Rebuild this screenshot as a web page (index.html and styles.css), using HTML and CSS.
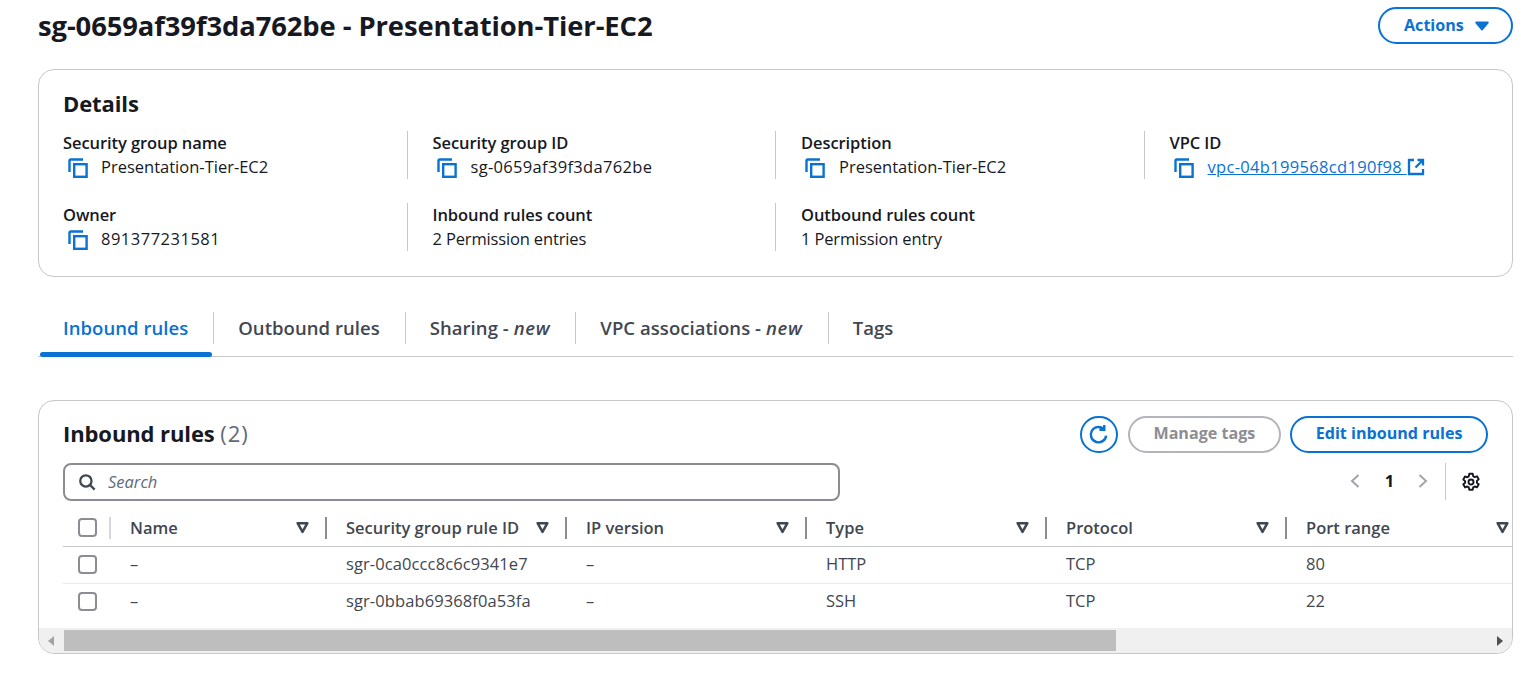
FILE: index.html
```html
<!DOCTYPE html>
<html>
<head>
    <title>sg-0659af39f3da762be - Presentation-Tier-EC2</title>
    <meta charset="UTF-8">
    <link rel="stylesheet" href="styles.css">
</head>
<body>
    <svg class="sprites" width="0" height="0">
        <symbol id="copy" viewBox="0 0 20 20">
            <path d="M1.5 14V2.5a1 1 0 0 1 1-1H15" fill="none" stroke="currentColor" stroke-width="2.4"/>
            <rect x="6.2" y="6.2" width="12.4" height="12.6" fill="none" stroke="currentColor" stroke-width="2.4"/>
        </symbol>
        <symbol id="caret" viewBox="0 0 16 16">
            <path d="M3 5h10l-5 6z" fill="currentColor" stroke="currentColor" stroke-width="2" stroke-linejoin="round"/>
        </symbol>
        <symbol id="sort" viewBox="0 0 12 12">
            <path d="M1.5 2h9L6 10z" fill="none" stroke="currentColor" stroke-width="2.300" stroke-linejoin="round"/>
        </symbol>
    </svg>

    <div class="page-head">
        <h1>sg-0659af39f3da762be - Presentation-Tier-EC2</h1>
        <button class="btn actions">Actions <svg class="caret"><use href="#caret"/></svg></button>
    </div>

    <section class="card details">
        <h2>Details</h2>
        <div class="details-grid">
            <div class="field">
                <div class="label">Security group name</div>
                <div class="value"><svg class="copy"><use href="#copy"/></svg>Presentation-Tier-EC2</div>
            </div>
            <div class="field">
                <div class="label">Security group ID</div>
                <div class="value digits"><svg class="copy"><use href="#copy"/></svg>sg-0659af39f3da762be</div>
            </div>
            <div class="field">
                <div class="label">Description</div>
                <div class="value"><svg class="copy"><use href="#copy"/></svg>Presentation-Tier-EC2</div>
            </div>
            <div class="field">
                <div class="label">VPC ID</div>
                <div class="value digits"><svg class="copy"><use href="#copy"/></svg><a href="#">vpc-04b199568cd190f98 </a>
                    <svg class="external" viewBox="0 0 18 18"><path d="M7 2H2v14h14v-5M10.500 2H16v5.500M16 2 8.500 9.500" fill="none" stroke="currentColor" stroke-width="2.300"/></svg>
                </div>
            </div>
            <div class="field">
                <div class="label">Owner</div>
                <div class="value owner-id"><svg class="copy"><use href="#copy"/></svg>891377231581</div>
            </div>
            <div class="field">
                <div class="label">Inbound rules count</div>
                <div class="value tight">2 Permission entries</div>
            </div>
            <div class="field">
                <div class="label">Outbound rules count</div>
                <div class="value tight">1 Permission entry</div>
            </div>
        </div>
    </section>

    <nav class="tabs">
        <div class="tab active"><span>Inbound rules</span></div>
        <div class="tab"><span>Outbound rules</span></div>
        <div class="tab"><span>Sharing - <i>new</i></span></div>
        <div class="tab"><span>VPC associations - <i>new</i></span></div>
        <div class="tab"><span>Tags</span></div>
    </nav>

    <section class="card rules">
        <div class="rules-head">
            <h2>Inbound rules <span class="count">(2)</span></h2>
            <div class="rules-actions">
                <button class="btn refresh" aria-label="Refresh">
                    <svg viewBox="0 0 20 20"><path d="M16.500 10.500A7 7 0 1 1 14 4.300M14.800 0.800v4.400h-4.400" fill="none" stroke="currentColor" stroke-width="2.200"/></svg>
                </button>
                <button class="btn disabled">Manage tags</button>
                <button class="btn">Edit inbound rules</button>
            </div>
        </div>
        <div class="filter-row">
            <div class="search">
                <svg viewBox="0 0 16 16"><circle cx="7" cy="7" r="5" fill="none" stroke="currentColor" stroke-width="2"/><path d="m10.800 10.800 4 4" stroke="currentColor" stroke-width="2"/></svg>
                <span>Search</span>
            </div>
            <div class="pager">
                <svg class="chev" viewBox="0 0 12 16"><path d="M9.500 2 3 8l6.500 6" fill="none" stroke="currentColor" stroke-width="2"/></svg>
                <b>1</b>
                <svg class="chev" viewBox="0 0 12 16"><path d="M2.500 2 9 8l-6.500 6" fill="none" stroke="currentColor" stroke-width="2"/></svg>
                <div class="gear-wrap">
                    <svg class="gear" viewBox="0 0 20 20"><path d="M8.300 1.800h3.400l.5 2.400 1.500.9 2.300-.8 1.700 3-1.800 1.600v1.800l1.800 1.600-1.700 3-2.300-.8-1.500.9-.5 2.400H8.300l-.5-2.400-1.500-.9-2.300.8-1.700-3 1.800-1.600V9.100L2.300 7.500l1.700-3 2.300.8 1.500-.9z" fill="none" stroke="currentColor" stroke-width="1.900" stroke-linejoin="round"/><circle cx="10" cy="10" r="2.500" fill="none" stroke="currentColor" stroke-width="1.900"/></svg>
                </div>
            </div>
        </div>
        <div class="table-wrap">
            <table>
                <thead>
                    <tr>
                        <th class="check"><span class="box"></span></th>
                        <th class="col-name">Name<svg class="sort"><use href="#sort"/></svg></th>
                        <th>Security group rule ID<svg class="sort"><use href="#sort"/></svg></th>
                        <th>IP version<svg class="sort"><use href="#sort"/></svg></th>
                        <th>Type<svg class="sort"><use href="#sort"/></svg></th>
                        <th>Protocol<svg class="sort"><use href="#sort"/></svg></th>
                        <th>Port range<svg class="sort"><use href="#sort"/></svg></th>
                    </tr>
                </thead>
                <tbody>
                    <tr>
                        <td class="check"><span class="box"></span></td>
                        <td class="col-name">–</td>
                        <td class="rule-id">sgr-0ca0ccc8c6c9341e7</td>
                        <td>–</td>
                        <td>HTTP</td>
                        <td>TCP</td>
                        <td>80</td>
                    </tr>
                    <tr>
                        <td class="check"><span class="box"></span></td>
                        <td class="col-name">–</td>
                        <td class="rule-id">sgr-0bbab69368f0a53fa</td>
                        <td>–</td>
                        <td>SSH</td>
                        <td>TCP</td>
                        <td>22</td>
                    </tr>
                </tbody>
            </table>
        </div>
        <div class="scrollbar">
            <span class="arrow left"></span>
            <div class="track"><div class="thumb"></div></div>
            <span class="arrow right"></span>
        </div>
    </section>
</body>
</html>
```

FILE: styles.css
```css
* {
    box-sizing: border-box;
}
body {
    font-family: "Open Sans", "Noto Sans", sans-serif;
    font-size: 16.5px;
    line-height: 20px;
    color: #16191f;
    margin: 0;
    padding: 6px 22px 0 38px;
    background: #fff;
    overflow: hidden;
}
.sprites {
    position: absolute;
}
.page-head {
    display: flex;
    justify-content: space-between;
    align-items: flex-start;
    height: 63px;
}
h1 {
    font-size: 27.400px;
    line-height: 40px;
    font-weight: 700;
    margin: 0;
    letter-spacing: -0.1px;
}
h2 {
    margin: 0;
    font-size: 22px;
    line-height: 28px;
    font-weight: 700;
    letter-spacing: -0.1px;
}
.btn {
    font-family: inherit;
    font-size: 16.1px;
    font-weight: 700;
    line-height: 20px;
    height: 37px;
    padding: 0 23.500px 3px;
    color: #0972d3;
    background: #fff;
    border: 2px solid #0972d3;
    border-radius: 20px;
    display: inline-flex;
    align-items: center;
    white-space: nowrap;
}
.actions {
    margin-top: 1px;
    width: 135px;
    padding: 0 0 1px 24px;
}
.caret {
    width: 18px;
    height: 18px;
    margin: 1px 0 0 9px;
}
.card {
    border: 1px solid #c6c6cd;
    border-radius: 16px;
    background: #fff;
}
.details {
    height: 208px;
    padding: 19px 24px 0;
}
.details-grid {
    display: grid;
    grid-template-columns: repeat(4, 344px);
    column-gap: 24.500px;
    row-gap: 24px;
    margin-top: 14px;
}
.field {
    border-left: 1px solid #c6c6cd;
    padding-left: 25px;
    height: 48px;
    margin-left: -25px;
    white-space: nowrap;
}
.field:nth-child(4n + 1) {
    border-left: none;
    padding-left: 0;
    margin-left: 0;
}
.label {
    font-weight: 600;
    line-height: 24px;
    letter-spacing: -0.08px;
}
.value {
    display: flex;
    align-items: center;
    height: 24px;
    color: #16191f;
}
.digits {
    letter-spacing: 0.32px;
}
.owner-id {
    letter-spacing: 0.5px;
}
.tight {
    letter-spacing: -0.15px;
}
.copy {
    width: 20px;
    height: 20px;
    color: #0972d3;
    margin: 2px 14px 0 4px;
    flex: none;
}
.field:nth-child(4n + 1) .copy {
    margin: 2px 13px 0 5px;
}
.value a {
    color: #0972d3;
    white-space: pre;
}
.external {
    width: 18px;
    height: 18px;
    color: #0972d3;
    margin-left: 0;
}
.tabs {
    display: flex;
    align-items: stretch;
    height: 45px;
    margin-top: 35px;
    padding-left: 2px;
    border-bottom: 1px solid #c6c6cd;
}
.tab {
    font-size: 18.5px;
    font-weight: 600;
    color: #414750;
    height: 44px;
    padding: 0 0 0 1px;
    position: relative;
    letter-spacing: 0.05px;
}
.tab span {
    display: block;
    line-height: 32px;
    height: 32px;
    padding: 0 24px;
    white-space: pre;
    border-left: 1px solid #c6c6cd;
}
.tab:first-child span {
    border-left: none;
    padding-left: 22px;
}
.tab i {
    font-weight: 600;
    letter-spacing: 0.7px;
}
.tab.active {
    color: #0972d3;
}
.tab.active::after {
    content: "";
    position: absolute;
    left: 0;
    right: 0;
    bottom: -1px;
    height: 5px;
    border-radius: 3px;
    background: #0972d3;
}
.rules {
    height: 254px;
    margin-top: 43px;
    position: relative;
    overflow: hidden;
}
.rules-head {
    display: flex;
    justify-content: space-between;
    padding: 15px 24px 0;
    height: 62px;
}
.rules-head h2 {
    line-height: 34px;
}
.count {
    font-weight: 400;
    color: #5f6b7a;
    letter-spacing: 1px;
}
.rules-actions {
    display: flex;
    gap: 9.500px;
}
.refresh {
    width: 38px;
    padding: 0;
    justify-content: center;
}
.refresh svg {
    width: 22px;
    height: 22px;
}
.btn.disabled {
    color: #8d8d94;
    border-color: #b4b4bb;
}
.filter-row {
    display: flex;
    justify-content: space-between;
    padding: 0 24px 0;
    height: 46px;
}
.search {
    width: 777px;
    height: 38px;
    border: 2px solid #8c8c94;
    border-radius: 8px;
    display: flex;
    align-items: center;
    padding-left: 13px;
    color: #5f6b7a;
    font-style: italic;
}
.search svg {
    width: 18px;
    height: 18px;
    color: #414750;
    margin-right: 12px;
}
.pager {
    display: flex;
    align-items: flex-start;
    color: #16191f;
}
.pager b {
    width: 56px;
    padding-left: 1px;
    text-align: center;
    line-height: 36px;
}
.chev {
    width: 12px;
    height: 16px;
    margin-top: 10px;
    color: #a4a4ad;
}
.gear-wrap {
    margin-left: 16px;
    height: 37px;
    padding: 9px 0 0 15px;
    border-left: 1px solid #c6c6cd;
    margin-right: 7px;
}
.gear {
    width: 20px;
    height: 20px;
    display: block;
}
.table-wrap {
    padding-left: 24px;
    overflow: hidden;
}
table {
    border-collapse: collapse;
    table-layout: fixed;
    width: 1463px;
}
th {
    text-align: left;
    font-weight: 600;
    color: #414750;
    height: 37px;
    padding: 1px 0 0 20px;
    position: relative;
    width: 240px;
    border-bottom: 1px solid #c6c6cd;
    white-space: nowrap;
}
th::after {
    content: "";
    position: absolute;
    right: -1px;
    top: 8px;
    height: 22px;
    width: 2px;
    background: #8c8c94;
}
th.check {
    width: 47px;
    padding-left: 15px;
}
th.check::after {
    width: 2px;
    background: #d5d5da;
}
th.col-name {
    width: 216px;
}
th:last-child::after {
    display: none;
}
.sort {
    position: absolute;
    right: 17px;
    top: 12px;
    width: 13px;
    height: 13px;
}
td {
    height: 37px;
    padding: 0 0 2px 20px;
    color: #414750;
    border-bottom: 1px solid #e9ebed;
}
td.rule-id {
    letter-spacing: 0.1px;
}
tr:last-child td {
    border-bottom: none;
}
td.check {
    padding: 0 0 0 15px;
}
.box {
    display: block;
    width: 19px;
    height: 19px;
    border: 2px solid #8c8c94;
    border-radius: 4px;
}
.scrollbar {
    position: absolute;
    left: 0;
    right: 0;
    bottom: 0;
    height: 25px;
    background: #f0f0f0;
    display: flex;
    align-items: center;
}
.track {
    flex: 1;
    height: 21px;
    padding-left: 25px;
}
.thumb {
    width: 1052px;
    height: 21px;
    background: #bebebe;
}
.arrow {
    width: 0;
    height: 0;
    border-top: 5px solid transparent;
    border-bottom: 5px solid transparent;
}
.arrow.left {
    border-right: 6px solid #a3a3a3;
    margin-left: 9px;
    margin-right: -15px;
}
.arrow.right {
    border-left: 6px solid #505050;
    margin-right: 9px;
}
```
